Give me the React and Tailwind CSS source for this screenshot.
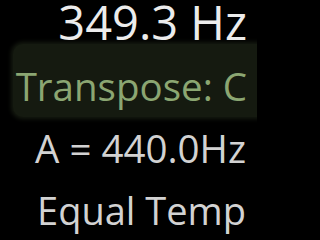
import React from 'react';

const TunerReadout = () => {
  return (
    <div className="w-[257px] h-[237px] bg-black overflow-hidden font-['Open_Sans',sans-serif] text-right">
      <div className="pr-[10px] text-[47px] leading-[44px] text-[#ececec]">349.3 Hz</div>
      <div className="ml-[13px] mr-[-12px] pt-[12px] rounded-[10px] bg-[#151a10] shadow-[0_0_4px_2px_#151a10]">
        <div className="pr-[22px] text-[38.5px] leading-[61px] text-[#8ba672]">Transpose: C</div>
      </div>
      <div className="pr-[11px] text-[38.5px] leading-[62px] text-[#d2d2d2]">A = 440.0Hz</div>
      <div className="pr-[11px] text-[38px] leading-[62px] text-[#d2d2d2]">Equal Temp</div>
    </div>
  );
};

export default function App() {
  return (
    <div className="min-h-screen w-full bg-black">
      <TunerReadout />
    </div>
  );
}
